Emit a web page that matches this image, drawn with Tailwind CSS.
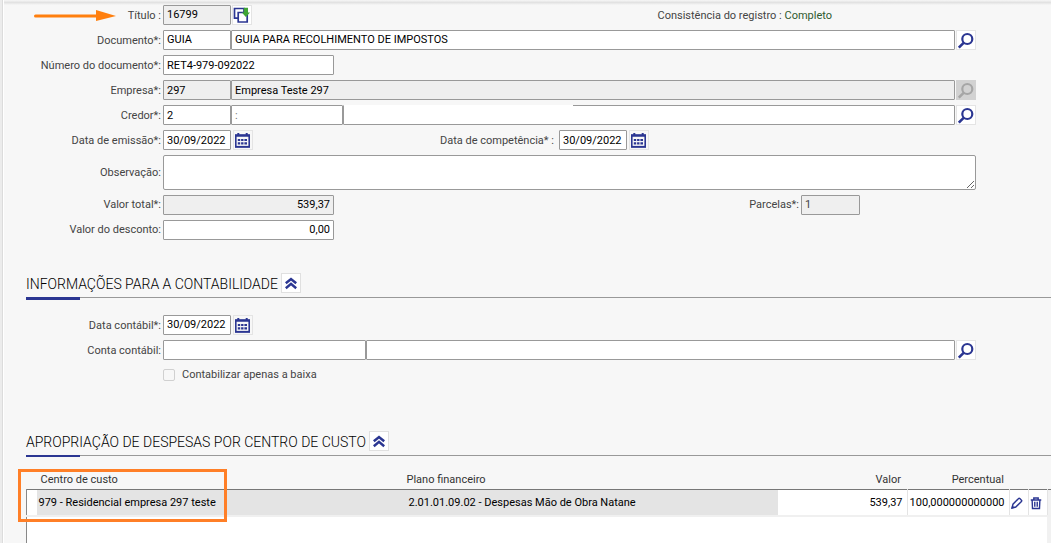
<!DOCTYPE html>
<html lang="pt-BR">

<head>
  <meta charset="UTF-8">
  <meta name="viewport" content="width=device-width, initial-scale=1.0">
  <title>Título 16799</title>
  <script src="https://cdn.jsdelivr.net/npm/@tailwindcss/browser@4"></script>
</head>

<body class="min-h-screen flex bg-[#f7f7f7] text-[#444] text-[11px] leading-4 font-['Roboto',sans-serif] overflow-hidden">
  <!-- Icons -->
  <svg class="hidden" xmlns="http://www.w3.org/2000/svg">
    <symbol id="search" viewBox="0 0 18 18">
      <circle cx="10.300" cy="8" r="5" fill="none" stroke="currentColor" stroke-width="2.200" />
      <path d="M6.600 11.800L1.800 16.600" fill="none" stroke="currentColor" stroke-width="2.600" />
    </symbol>
    <symbol id="calendar" viewBox="0 0 18 18">
      <path d="M1.800 4h13.400v11.800H1.800z" fill="none" stroke="currentColor" stroke-width="1.600" />
      <path d="M1 4.800h15M4.300 2v3.500M12.700 2v3.500" stroke="currentColor" stroke-width="2" />
      <path d="M1 15.800h15" stroke="currentColor" stroke-width="1.800" />
      <path d="M3.800 9h2.400M7.100 9h2.400M10.400 9h2.600M3.800 12.300h2.400M7.100 12.300h2.400M10.400 12.300h2.600" stroke="currentColor" stroke-width="2.200" />
    </symbol>
    <symbol id="chevrons" viewBox="0 0 18 18">
      <path d="M3.800 9.300L9 5L14.200 9.300M3.800 14.200L9 9.900L14.200 14.200" fill="none" stroke="currentColor" stroke-width="2.500" />
    </symbol>
    <symbol id="copy" viewBox="0 0 18 18">
      <path d="M5 12.200H1.500V2.500H11V6" fill="none" stroke="currentColor" stroke-width="1.700" />
      <path d="M5.200 6.500h9v9.500h-9z" fill="#fff" stroke="currentColor" stroke-width="1.700" />
      <path d="M10.800 1.800h4.200v4.700h2L12.900 11L8.800 6.500h2z" fill="#3fa535" />
    </symbol>
    <symbol id="pencil" viewBox="0 0 16 16">
      <path d="M2.300 13.700L3.400 9.400L9.800 2.900Q10.500 2.200 11.200 2.900L13.100 4.800Q13.800 5.500 13.100 6.200L6.600 12.600Z" fill="none" stroke="currentColor" stroke-width="1.600" />
      <path d="M1.500 14.500l1-4l3 3z" fill="currentColor" />
    </symbol>
    <symbol id="trash" viewBox="0 0 16 16">
      <path d="M2 4.500h12M5.500 4V2.200h5V4M3.600 5l.4 9.200h8l.4-9.200M6.600 6.500v5.800M9.400 6.500v5.800" fill="none" stroke="currentColor" stroke-width="1.600" />
    </symbol>
  </svg>

  <div class="w-[3px] shrink-0 bg-[#ececec] border-r border-[#dcdcdc]"></div>

  <main class="flex-1 min-w-0 flex flex-col border-l border-white">
    <div class="h-[5px] shrink-0 bg-linear-to-b from-[#f7f7f7] via-[#e2e2e2] to-[#f7f7f7]"></div>

    <form class="flex flex-col gap-[5px] pr-[75px]">
      <div class="flex items-center gap-0.5 h-5">
        <div class="w-[157px] shrink-0 flex items-center justify-between">
          <svg class="ml-[30px] w-[83px] h-3 text-[#ff7f0e]" viewBox="0 0 83 12" xmlns="http://www.w3.org/2000/svg">
            <path d="M1.500 7H65" stroke="currentColor" stroke-width="3" stroke-linecap="round" />
            <path d="M62 1L82 7L62 12z" fill="currentColor" />
          </svg>
          <label for="titulo" class="pt-0.5">Título :</label>
        </div>
        <input id="titulo" value="16799" readonly class="w-[68px] h-5 px-[3px] pb-0.5 border border-[#999] rounded-[1px] bg-[#efefef] text-black">
        <button type="button" aria-label="Copiar título" class="-ml-px w-5 h-5 border border-[#e4e4e4] bg-white text-[#2b3692]">
          <svg class="w-full h-full"><use href="#copy" /></svg>
        </button>
        <p class="ml-auto mr-[144px] pt-0.5">Consistência do registro : <span class="text-[#2f5a2f]">Completo</span></p>
      </div>

      <div class="flex items-center gap-0.5 h-5">
        <label for="documento" class="w-[157px] shrink-0 pt-0.5 text-right">Documento*:</label>
        <div class="flex-1 flex">
          <input id="documento" value="GUIA" class="w-[68px] h-5 px-[3px] pb-0.5 border border-[#999] rounded-[1px] bg-white text-black">
          <input aria-label="Descrição do documento" value="GUIA PARA RECOLHIMENTO DE IMPOSTOS" class="flex-1 h-5 px-[3px] pb-0.5 border border-[#999] rounded-[1px] bg-white text-black">
          <button type="button" aria-label="Pesquisar documento" class="ml-px w-5 h-5 border border-[#e4e4e4] bg-white text-[#2b3692]">
            <svg class="w-full h-full"><use href="#search" /></svg>
          </button>
        </div>
      </div>

      <div class="flex items-center gap-0.5 h-5">
        <label for="numero" class="w-[157px] shrink-0 pt-0.5 text-right">Número do documento*:</label>
        <input id="numero" value="RET4-979-092022" class="w-[171px] h-5 px-[3px] border border-[#999] rounded-[1px] bg-white text-black">
      </div>

      <div class="flex items-center gap-0.5 h-5">
        <label for="empresa" class="w-[157px] shrink-0 pt-0.5 text-right">Empresa*:</label>
        <div class="flex-1 flex">
          <input id="empresa" value="297" readonly class="w-[68px] h-5 px-[3px] border border-[#999] rounded-[1px] bg-[#efefef] text-black">
          <input aria-label="Nome da empresa" value="Empresa Teste 297" readonly class="flex-1 h-5 px-[3px] border border-[#999] rounded-[1px] bg-[#efefef] text-black">
          <button type="button" disabled aria-label="Pesquisar empresa" class="ml-px w-5 h-5 border border-[#d2d2d2] bg-[#d2d2d2] text-[#a6a6a6]">
            <svg class="w-full h-full"><use href="#search" /></svg>
          </button>
        </div>
      </div>

      <div class="flex items-center gap-0.5 h-5">
        <label for="credor" class="w-[157px] shrink-0 pt-0.5 text-right">Credor*:</label>
        <div class="flex-1 flex">
          <input id="credor" value="2" class="w-[68px] h-5 px-[3px] border border-[#999] rounded-[1px] bg-white text-black">
          <input aria-label="Documento do credor" value=":" class="w-[112px] h-5 px-[3px] border border-[#999] rounded-[1px] bg-white text-[#777]">
          <div class="relative flex-1 flex">
            <input aria-label="Nome do credor" class="flex-1 h-5 px-[3px] border border-[#999] rounded-[1px] bg-white text-black">
            <span class="absolute left-px top-0 w-[229px] h-1 bg-white"></span>
          </div>
          <button type="button" aria-label="Pesquisar credor" class="ml-px w-5 h-5 border border-[#e4e4e4] bg-white text-[#2b3692]">
            <svg class="w-full h-full"><use href="#search" /></svg>
          </button>
        </div>
      </div>

      <div class="flex items-center gap-0.5 h-5">
        <label for="emissao" class="w-[157px] shrink-0 pt-0.5 text-right">Data de emissão*:</label>
        <input id="emissao" value="30/09/2022" class="w-[68px] h-5 px-[3px] border border-[#999] rounded-[1px] bg-white text-black">
        <button type="button" aria-label="Abrir calendário" class="w-5 h-5 border border-[#e4e4e4] bg-[#f7f7f7] text-[#2b3692]">
          <svg class="w-full h-full"><use href="#calendar" /></svg>
        </button>
        <div class="ml-auto mr-[327px] flex items-center gap-0.5">
          <label for="competencia" class="mr-[3px] pt-0.5">Data de competência* :</label>
          <input id="competencia" value="30/09/2022" class="w-[68px] h-5 px-[3px] border border-[#999] rounded-[1px] bg-white text-black">
          <button type="button" aria-label="Abrir calendário" class="w-5 h-5 border border-[#e4e4e4] bg-[#f7f7f7] text-[#2b3692]">
            <svg class="w-full h-full"><use href="#calendar" /></svg>
          </button>
        </div>
      </div>

      <div class="flex items-center gap-0.5">
        <label for="observacao" class="w-[157px] shrink-0 text-right">Observação:</label>
        <textarea id="observacao" class="flex-1 h-[35px] px-[3px] border border-[#999] rounded-xs bg-white text-black"></textarea>
      </div>

      <div class="flex items-center gap-0.5 h-5">
        <label for="valor" class="w-[157px] shrink-0 text-right">Valor total*:</label>
        <input id="valor" value="539,37" readonly class="w-[171px] h-5 px-[3px] pb-0.5 border border-[#999] rounded-[1px] bg-[#efefef] text-black text-right">
        <div class="ml-auto mr-[116px] flex items-center gap-0.5">
          <label for="parcelas">Parcelas*:</label>
          <input id="parcelas" value="1" readonly class="w-[59px] h-5 px-[3px] pb-0.5 border border-[#999] rounded-[1px] bg-[#efefef] text-[#444]">
        </div>
      </div>

      <div class="flex items-center gap-0.5 h-5">
        <label for="desconto" class="w-[157px] shrink-0 text-right">Valor do desconto:</label>
        <input id="desconto" value="0,00" class="w-[171px] h-5 px-[3px] pb-0.5 border border-[#999] rounded-[1px] bg-white text-black text-right">
      </div>
    </form>

    <!-- Informações para a contabilidade -->
    <section class="mt-[33px]">
      <div class="ml-[22px] flex items-start gap-[3px] h-[25px] border-b border-[#999]">
        <h2 class="pt-px text-sm leading-5 font-light text-black">INFORMAÇÕES PARA A CONTABILIDADE</h2>
        <button type="button" aria-label="Recolher seção" class="w-5 h-5 border border-[#e0e0e0] bg-white text-[#2b3692]">
          <svg class="w-full h-full"><use href="#chevrons" /></svg>
        </button>
      </div>
      <div class="-mt-px ml-[22px] w-[54px] h-[3px] bg-[#2b3692]"></div>

      <div class="mt-[15px] pr-[75px] flex flex-col gap-[5px]">
        <div class="flex items-center gap-0.5 h-5">
          <label for="data-contabil" class="w-[157px] shrink-0 pt-0.5 text-right">Data contábil*:</label>
          <input id="data-contabil" value="30/09/2022" class="w-[68px] h-5 px-[3px] pb-0.5 border border-[#999] rounded-[1px] bg-white text-black">
          <button type="button" aria-label="Abrir calendário" class="w-5 h-5 border border-[#e4e4e4] bg-[#f7f7f7] text-[#2b3692]">
            <svg class="w-full h-full"><use href="#calendar" /></svg>
          </button>
        </div>
        <div class="flex items-center gap-0.5 h-5">
          <label for="conta" class="w-[157px] shrink-0 pt-0.5 text-right">Conta contábil:</label>
          <div class="flex-1 flex">
            <input id="conta" class="w-[203px] h-5 px-[3px] border border-[#999] rounded-[1px] bg-white text-black">
            <input aria-label="Descrição da conta contábil" class="flex-1 h-5 px-[3px] border border-[#999] rounded-[1px] bg-white text-black">
            <button type="button" aria-label="Pesquisar conta contábil" class="ml-px w-5 h-5 border border-[#e4e4e4] bg-white text-[#2b3692]">
              <svg class="w-full h-full"><use href="#search" /></svg>
            </button>
          </div>
        </div>
        <div class="ml-[159px] flex items-center gap-[7px] h-5">
          <input id="baixa" type="checkbox" class="appearance-none w-3 h-3 border border-[#d0d0d0] rounded-xs bg-[#f7f7f7]">
          <label for="baixa">Contabilizar apenas a baixa</label>
        </div>
      </div>
    </section>

    <!-- Apropriação por centro de custo -->
    <section class="mt-[46px] flex-1 flex flex-col">
      <div class="ml-[22px] flex items-start gap-[3px] h-[25px] border-b border-[#999]">
        <h2 class="pt-px text-sm leading-5 font-light text-black">APROPRIAÇÃO DE DESPESAS POR CENTRO DE CUSTO</h2>
        <button type="button" aria-label="Recolher seção" class="w-5 h-5 border border-[#e0e0e0] bg-white text-[#2b3692]">
          <svg class="w-full h-full"><use href="#chevrons" /></svg>
        </button>
      </div>
      <div class="-mt-px ml-[22px] w-[54px] h-0.5 bg-[#2b3692]"></div>

      <div class="relative mt-3 ml-[22px] flex-1 flex flex-col">
        <table class="w-full table-fixed border-collapse">
          <colgroup>
            <col class="w-[10px]">
            <col class="w-[370px]">
            <col>
            <col class="w-[129px]">
            <col class="w-[102px]">
            <col class="w-[19px]">
            <col class="w-[19px]">
            <col class="w-[4px]">
          </colgroup>
          <thead>
            <tr class="h-5 border-b border-[#777] text-[#333]">
              <th></th>
              <th class="pt-0.5 pl-1 text-left font-normal">Centro de custo</th>
              <th class="pt-0.5 text-left font-normal">Plano financeiro</th>
              <th class="pt-0.5 pr-1.5 text-right font-normal">Valor</th>
              <th class="pt-0.5 pr-[5px] text-right font-normal">Percentual</th>
              <th></th>
              <th></th>
              <th></th>
            </tr>
          </thead>
          <tbody>
            <tr class="h-[27px] border-b-2 border-[#f0f0f0] bg-white text-black">
              <td class="border-l border-[#888]"></td>
              <td class="pt-0.5 pl-0.5 bg-[#e4e4e4]">979 - Residencial empresa 297 teste</td>
              <td class="pt-0.5 pl-0.5 bg-[#e4e4e4]">2.01.01.09.02 - Despesas Mão de Obra Natane</td>
              <td class="pt-0.5 pr-1 text-right border-r border-[#e4e4e4]">539,37</td>
              <td class="pt-0.5 pr-1 text-right border-r border-[#e4e4e4]">100,000000000000</td>
              <td class="pt-0.5 border-r border-[#e4e4e4] text-[#2b3692]">
                <button type="button" aria-label="Editar" class="block w-[14px] h-[14px]"><svg class="w-full h-full"><use href="#pencil" /></svg></button>
              </td>
              <td class="pt-0.5 border-r border-[#e4e4e4] text-[#2b3692]">
                <button type="button" aria-label="Excluir" class="block w-[14px] h-[14px]"><svg class="w-full h-full"><use href="#trash" /></svg></button>
              </td>
              <td class="bg-[#f1f1f1]"></td>
            </tr>
          </tbody>
        </table>
        <div class="flex-1 border-l border-[#888] border-r-4 border-r-[#f1f1f1] bg-white"></div>
        <!-- Highlight -->
        <div class="absolute -left-2 top-0 w-[209px] h-[53px] border-3 border-[#ff7f27] pointer-events-none"></div>
      </div>
    </section>
  </main>
</body>

</html>
